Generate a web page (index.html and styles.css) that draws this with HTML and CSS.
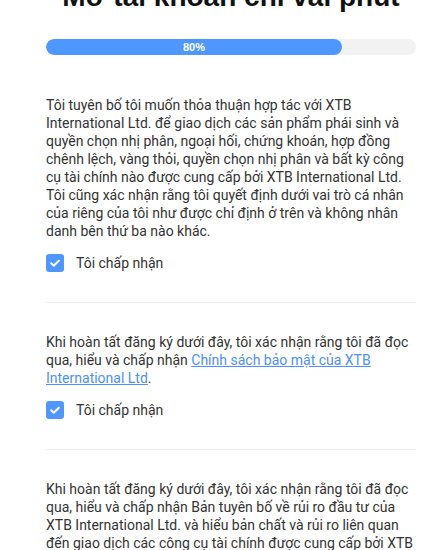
FILE: index.html
```html
<!DOCTYPE html>
<html lang="vi">
<head>
  <meta charset="UTF-8" />
  <meta name="viewport" content="width=device-width, initial-scale=1.0" />
  <title>Mở tài khoản</title>
  <link rel="stylesheet" href="styles.css">
</head>
<body>
  <div class="signup">
    <h1 class="signup__title">Mở tài khoản chỉ vài phút</h1>

    <div class="progress">
      <div class="progress__filled" style="width:80%">80%</div>
    </div>

    <div class="consent">
      <p class="consent__text">Tôi tuyên bố tôi muốn thỏa thuận hợp tác với XTB International Ltd. để giao dịch các sản phẩm phái sinh và quyền chọn nhị phân, ngoại hối, chứng khoán, hợp đồng chênh lệch, vàng thỏi, quyền chọn nhị phân và bất kỳ công cụ tài chính nào được cung cấp bởi XTB International Ltd. Tôi cũng xác nhận rằng tôi quyết định dưới vai trò cá nhân của riêng của tôi như được chỉ định ở trên và không nhân danh bên thứ ba nào khác.</p>
      <label class="check">
        <span class="check__box">
          <svg viewBox="0 0 18 18" width="18" height="18"><path d="M5.2 9.2l2.6 2.5 5-5" fill="none" stroke="#fff" stroke-width="2" stroke-linecap="round" stroke-linejoin="round"/></svg>
        </span>
        <span class="check__label">Tôi chấp nhận</span>
      </label>
    </div>

    <div class="consent">
      <p class="consent__text">Khi hoàn tất đăng ký dưới đây, tôi xác nhận rằng tôi đã đọc qua, hiểu và chấp nhận <a href="#" class="consent__link">Chính sách bảo mật của XTB International Ltd</a>.</p>
      <label class="check">
        <span class="check__box">
          <svg viewBox="0 0 18 18" width="18" height="18"><path d="M5.2 9.2l2.6 2.5 5-5" fill="none" stroke="#fff" stroke-width="2" stroke-linecap="round" stroke-linejoin="round"/></svg>
        </span>
        <span class="check__label">Tôi chấp nhận</span>
      </label>
    </div>

    <div class="consent">
      <p class="consent__text">Khi hoàn tất đăng ký dưới đây, tôi xác nhận rằng tôi đã đọc qua, hiểu và chấp nhận Bản tuyên bố về rủi ro đầu tư của XTB International Ltd. và hiểu bản chất và rủi ro liên quan đến giao dịch các công cụ tài chính được cung cấp bởi XTB International Ltd.</p>
    </div>
  </div>
</body>
</html>
```

FILE: styles.css
```css
*{margin:0;padding:0;box-sizing:border-box;}
html,body{overflow:hidden;}
body{
  font-family:Roboto,"Noto Sans",sans-serif;
  background:#fff;color:#333;
}
.signup{
  width:370px;margin-left:46px;
  margin-top:-19px;
}
.signup__title{
  font-family:"Liberation Sans",Arial,sans-serif;
  font-size:28px;font-weight:bold;color:#111;
  text-align:center;line-height:32px;
  margin-bottom:26px;
}
.progress{
  height:16px;background:#f2f2f2;border-radius:8px;
  overflow:hidden;margin-bottom:11px;
}
.progress__filled{
  height:100%;background:#4f97ff;border-radius:8px;
  color:#fff;font-family:"Liberation Sans",Arial,sans-serif;
  font-size:11px;font-weight:bold;line-height:16px;text-align:center;
}
.consent{
  padding:30px 0 30px;
  border-bottom:1px solid #eee;
}
.consent:last-child{border-bottom:none;}
.consent__text{font-size:14px;line-height:18px;}
.consent__link{color:#4d8ffd;text-decoration:underline;}
.check{
  display:flex;align-items:center;gap:12px;
  margin-top:14px;height:18px;cursor:pointer;
}
.check__box{
  width:18px;height:18px;border-radius:3px;background:#4f97ff;
  display:flex;align-items:center;justify-content:center;
}
.check__label{font-size:14px;}
```
